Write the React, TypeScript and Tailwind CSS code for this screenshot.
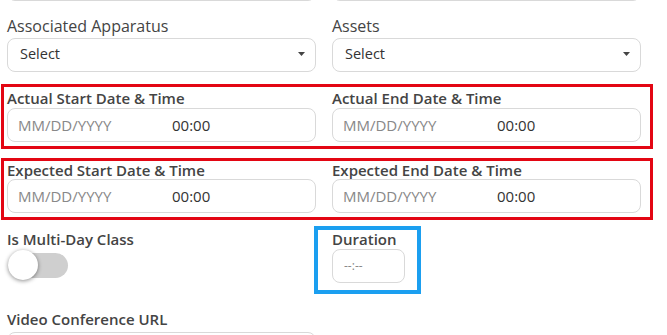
import React from 'react';

const Caret: React.FC = () => (
    <svg width="7" height="4" viewBox="0 0 7 4" className="shrink-0">
        <path d="M0 0h7L3.5 4z" fill="#444" />
    </svg>
);

const SelectBox: React.FC = () => (
    <div className="flex items-center justify-between h-[34px] w-full border border-[#d9d9d9] rounded-lg pl-[12px] pr-[10px] pb-[3px] text-[14.5px] text-[#333]">
        <span>Select</span>
        <Caret />
    </div>
);

const DateTimeInput: React.FC = () => (
    <div className="flex items-center h-[34px] w-full border border-[#d9d9d9] rounded-lg pl-[10px] text-[15px]">
        <span className="w-[154px] text-[#888]">MM/DD/YYYY</span>
        <span className="text-[#333]">00:00</span>
    </div>
);

const DateRow: React.FC<{ left: string; right: string; top: string; lead: string }> = ({ left, right, top, lead }) => (
    <div className={`w-[652px] ml-[1px] border-[3px] border-[#e30613] pl-[3px] pb-[4px] ${top}`}>
        <div className="flex gap-4">
            <div className="w-[309px]">
                <div className={`text-[15px] font-semibold text-[#444] ${lead}`}>{left}</div>
                <DateTimeInput />
            </div>
            <div className="w-[309px]">
                <div className={`text-[15px] font-semibold text-[#444] ${lead}`}>{right}</div>
                <DateTimeInput />
            </div>
        </div>
    </div>
);

const App: React.FC = () => {
    return (
        <div className="w-[667px] h-[335px] overflow-hidden bg-white font-['Open_Sans',sans-serif]">
            <div className="flex gap-4 pl-[7px] -mt-[33px]">
                <div className="w-[309px] h-[34px] border border-[#d9d9d9] rounded-lg"></div>
                <div className="w-[309px] h-[34px] border border-[#d9d9d9] rounded-lg"></div>
            </div>

            <div className="flex gap-4 pl-[7px] mt-[15px]">
                <div className="w-[309px]">
                    <div className="text-[16px] leading-[21px] text-[#444]">Associated Apparatus</div>
                    <div className="mt-[1px]"><SelectBox /></div>
                </div>
                <div className="w-[309px]">
                    <div className="text-[16px] leading-[21px] text-[#444]">Assets</div>
                    <div className="mt-[1px]"><SelectBox /></div>
                </div>
            </div>

            <DateRow left="Actual Start Date & Time" right="Actual End Date & Time" top="mt-[12px] pt-[1px]" lead="leading-[20px]" />
            <DateRow left="Expected Start Date & Time" right="Expected End Date & Time" top="mt-[9px]" lead="leading-[18px]" />

            <div className="flex gap-4 pl-[7px] mt-[6px]">
                <div className="w-[309px] pt-[3px]">
                    <div className="text-[15px] leading-[20px] font-semibold text-[#444]">Is Multi-Day Class</div>
                    <div className="relative mt-[1px] ml-[1px] w-[60px] h-[30px]">
                        <div className="absolute left-0 top-[3px] w-[60px] h-[25px] rounded-full bg-[#cfcfcf]"></div>
                        <div className="absolute left-0 top-0 w-[30px] h-[30px] rounded-full bg-white shadow-[0_1px_4px_rgba(0,0,0,0.45)]"></div>
                    </div>
                </div>
                <div className="w-[309px]">
                    <div className="-ml-[18px] w-[107px] h-[68px] border-[4px] border-[#1b9ff0] pl-[14px]">
                        <div className="text-[15px] leading-[19px] font-semibold text-[#444]">Duration</div>
                        <div className="flex items-center w-[73px] h-[34px] border border-[#d9d9d9] rounded-lg pl-[11px] text-[12px] text-[#888]">
                            --:--
                        </div>
                    </div>
                </div>
            </div>

            <div className="pl-[7px] mt-[15px]">
                <div className="text-[15px] leading-[20px] font-semibold text-[#444]">Video Conference URL</div>
                <div className="mt-[3px] w-[309px] h-[34px] border border-[#d9d9d9] rounded-lg"></div>
            </div>
        </div>
    );
};

export default App;
